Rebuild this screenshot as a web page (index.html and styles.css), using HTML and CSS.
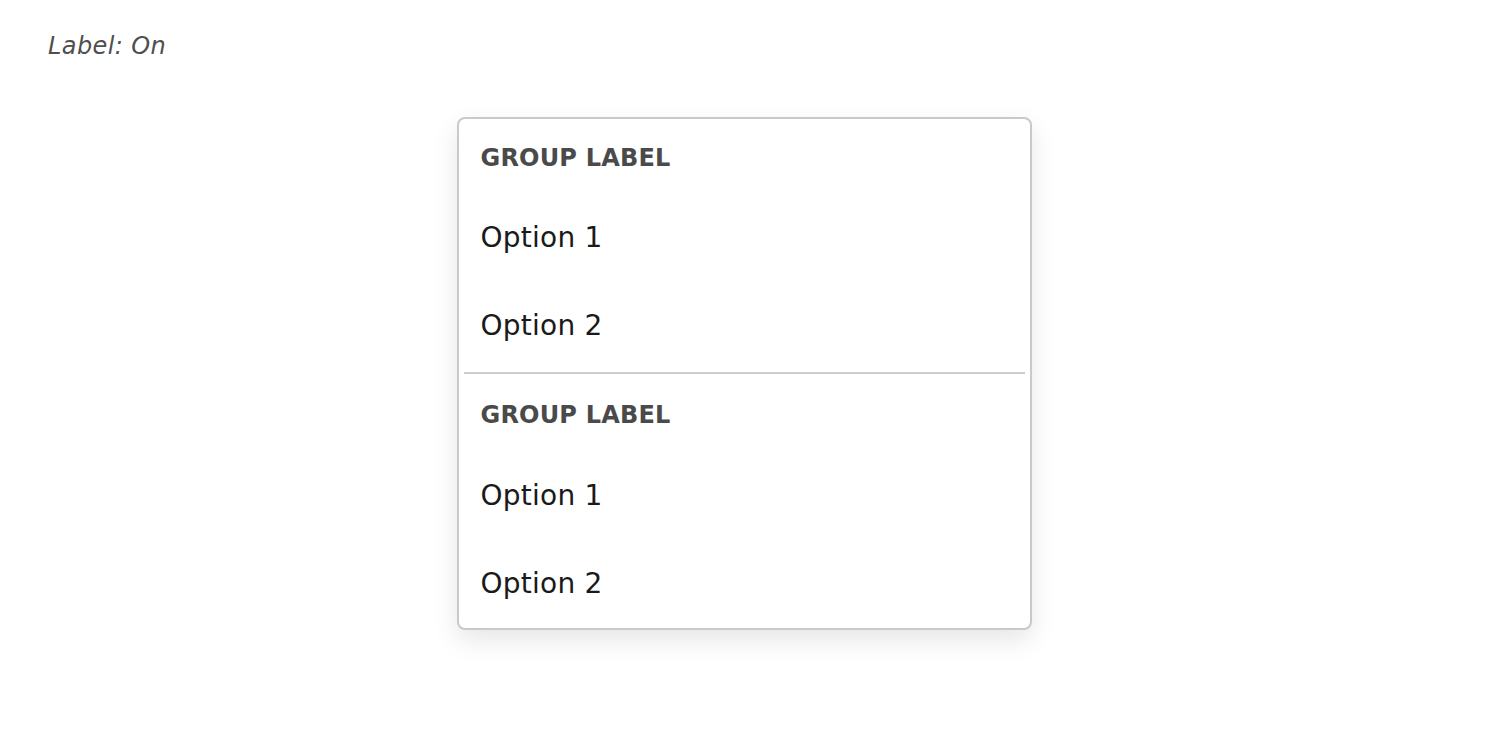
FILE: index.html
```html
<!DOCTYPE html>
<html>
<head>
<meta charset="utf-8">
<link rel="stylesheet" href="styles.css">
</head>
<body>
<div class="page">
  <p class="state-label">Label: On</p>
  <div class="menu">
    <div class="group">
      <div class="group-label">GROUP LABEL</div>
      <div class="option">Option 1</div>
      <div class="option">Option 2</div>
    </div>
    <div class="divider"></div>
    <div class="group group-second">
      <div class="group-label">GROUP LABEL</div>
      <div class="option">Option 1</div>
      <div class="option">Option 2</div>
    </div>
  </div>
</div>
</body>
</html>
```

FILE: styles.css
```css
html, body {
  margin: 0;
  padding: 0;
  background: #ffffff;
}

body {
  font-family: "DejaVu Sans", "Noto Sans", "Liberation Sans", sans-serif;
}

.page {
  padding: 30px 48px 100px;
}

.state-label {
  margin: 0;
  font-size: 24px;
  line-height: 32px;
  font-style: italic;
  letter-spacing: 0.4px;
  color: #4f4f4f;
}

.menu {
  width: 571px;
  margin: 55px auto 0;
  border: 2px solid #c9c9c9;
  border-radius: 8px;
  background: #ffffff;
  box-shadow: 0 10px 26px rgba(0, 0, 0, 0.10);
}

.group-label {
  height: 74px;
  display: flex;
  align-items: center;
  padding: 4px 22px 0;
  box-sizing: border-box;
  font-size: 24px;
  font-weight: 700;
  letter-spacing: 0.2px;
  color: #4a4a4a;
}

.group-second .group-label {
  height: 77px;
  padding-top: 5px;
}

.option {
  height: 88px;
  display: flex;
  align-items: center;
  padding: 0 22px;
  font-size: 28px;
  letter-spacing: 0.25px;
  color: #1a1a1a;
}

.group-second .option:last-child {
  height: 89px;
  padding-bottom: 1px;
  box-sizing: border-box;
}

.divider {
  height: 2px;
  margin: 3px 5px 0;
  background: #cdcdcd;
}
```
